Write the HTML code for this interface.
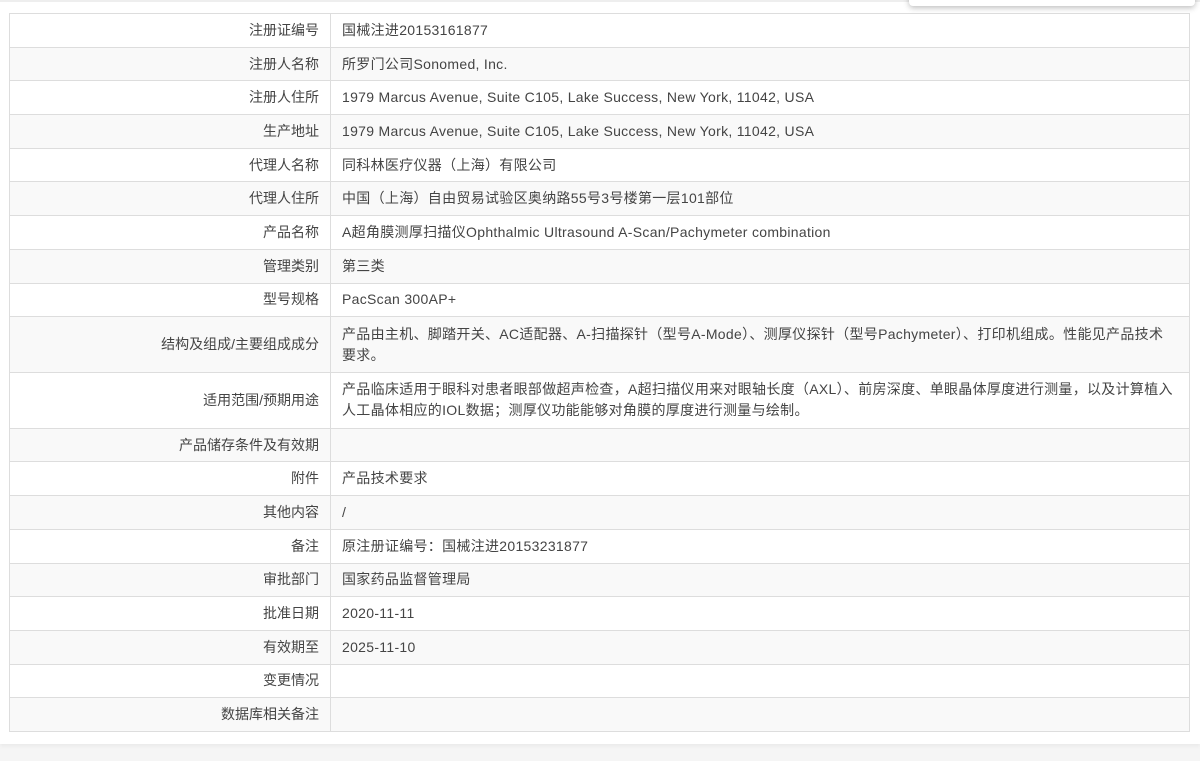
<!DOCTYPE html>
<html><head><meta charset="utf-8"><style>
html,body{margin:0;padding:0;}
body{width:1200px;height:761px;background:#f5f5f5;position:relative;overflow:hidden;font-family:"Liberation Sans","Noto Sans CJK SC",sans-serif;font-size:14px;color:#444;}
.card{position:absolute;left:0;top:0;width:1200px;height:744px;background:#fff;box-shadow:0 2px 4px rgba(0,0,0,0.05);}
.topline{position:absolute;left:0;top:0;width:1200px;height:2px;background:#eee;}
.pop{position:absolute;left:909px;top:-10px;width:286px;height:16px;background:#fff;border-radius:4px;box-shadow:0 2px 6px rgba(0,0,0,0.25);}
table{position:absolute;left:9px;top:13px;width:1181px;border-collapse:collapse;table-layout:fixed;}
td{border:1px solid #ddd;padding:0 11px;height:32.7px;line-height:21px;vertical-align:middle;letter-spacing:0.3px;}
td.l{width:298px;text-align:right;letter-spacing:0;}
tr:nth-child(even) td{background:#f9f9f9;}
tr.d td{height:54.8px;}
</style></head><body>
<div class="card"><div class="topline"></div></div>
<table>
<tr><td class="l">注册证编号</td><td>国械注进20153161877</td></tr>
<tr><td class="l">注册人名称</td><td>所罗门公司Sonomed, Inc.</td></tr>
<tr><td class="l">注册人住所</td><td>1979 Marcus Avenue, Suite C105, Lake Success, New York, 11042, USA</td></tr>
<tr><td class="l">生产地址</td><td>1979 Marcus Avenue, Suite C105, Lake Success, New York, 11042, USA</td></tr>
<tr><td class="l">代理人名称</td><td>同科林医疗仪器（上海）有限公司</td></tr>
<tr><td class="l">代理人住所</td><td>中国（上海）自由贸易试验区奥纳路55号3号楼第一层101部位</td></tr>
<tr><td class="l">产品名称</td><td>A超角膜测厚扫描仪Ophthalmic Ultrasound A-Scan/Pachymeter combination</td></tr>
<tr><td class="l">管理类别</td><td>第三类</td></tr>
<tr><td class="l">型号规格</td><td>PacScan 300AP+</td></tr>
<tr class="d"><td class="l">结构及组成/主要组成成分</td><td>产品由主机、脚踏开关、AC适配器、A-扫描探针（型号A-Mode）、测厚仪探针（型号Pachymeter）、打印机组成。性能见产品技术<br>要求。</td></tr>
<tr class="d"><td class="l">适用范围/预期用途</td><td>产品临床适用于眼科对患者眼部做超声检查，A超扫描仪用来对眼轴长度（AXL）、前房深度、单眼晶体厚度进行测量，以及计算植入<br>人工晶体相应的IOL数据；测厚仪功能能够对角膜的厚度进行测量与绘制。</td></tr>
<tr><td class="l">产品储存条件及有效期</td><td></td></tr>
<tr><td class="l">附件</td><td>产品技术要求</td></tr>
<tr><td class="l">其他内容</td><td>/</td></tr>
<tr><td class="l">备注</td><td>原注册证编号：国械注进20153231877</td></tr>
<tr><td class="l">审批部门</td><td>国家药品监督管理局</td></tr>
<tr><td class="l">批准日期</td><td>2020-11-11</td></tr>
<tr><td class="l">有效期至</td><td>2025-11-10</td></tr>
<tr><td class="l">变更情况</td><td></td></tr>
<tr><td class="l">数据库相关备注</td><td></td></tr>
</table>
<div class="pop"></div>
</body></html>
